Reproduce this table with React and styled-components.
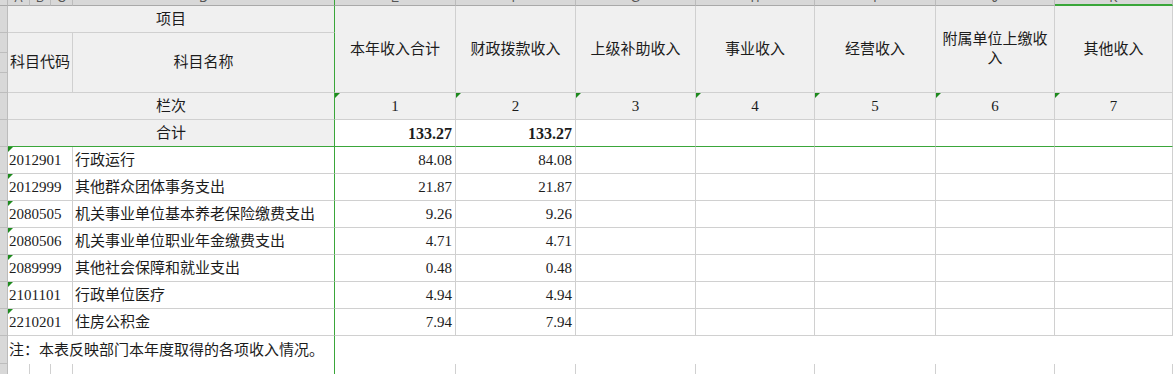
import React from "react";
import styled, { createGlobalStyle, css } from "styled-components";

const GRID = "#d0d0d0";
const GREEN = "#3aa63a";
const HEAD_BG = "#f0f0f0";

const GlobalStyle = createGlobalStyle`
  html, body { margin: 0; padding: 0; background: #fff; overflow: hidden; }
  #root { width: 1173px; height: 374px; overflow: hidden; }
`;

const Sheet = styled.div`
  display: grid;
  width: 1173px;
  height: 374px;
  overflow: hidden;
  grid-template-columns: 8px 22px 21px 22px 262px 121px 120px 120px 119px 121px 119px 1fr;
  grid-template-rows: 6px 27px 20px 20px 20px 27px 27px repeat(7, 27px) 28px 30px;
  font-family: "Liberation Serif", "Noto Sans CJK SC", serif;
  font-size: 15px;
  color: #1c1c1c;
  background: #fff;
`;

const Corner = styled.div`
  background: #d8d8d8;
  border-right: 1px solid #b8b8b8;
  border-bottom: 1px solid #a9a9a9;
  box-sizing: border-box;
`;

const ColHead = styled.div`
  box-sizing: border-box;
  background: #d8d8d8;
  border-right: 1px solid ${(p) => (p.$frozen ? GREEN : "#bcbcbc")};
  border-bottom: ${(p) => (p.$selected ? `2px solid ${GREEN}` : "1px solid #a9a9a9")};
  overflow: hidden;
  display: flex;
  align-items: flex-end;
  justify-content: center;
`;

const Letter = styled.span`
  font-family: "Liberation Sans", sans-serif;
  font-size: 12px;
  line-height: 12px;
  color: #555;
  margin-bottom: ${(p) => (p.$selected ? "0" : "1px")};
`;

const RowHead = styled.div`
  box-sizing: border-box;
  background: #d8d8d8;
  border-right: 1px solid #bcbcbc;
  border-bottom: ${(p) => (p.$last ? "none" : "1px solid #bdbdbd")};
`;

const Cell = styled.div`
  position: relative;
  box-sizing: border-box;
  grid-column: span ${(p) => p.$span || 1};
  grid-row: span ${(p) => p.$rows || 1};
  display: flex;
  align-items: center;
  justify-content: ${(p) =>
    p.$align === "right" ? "flex-end" : p.$align === "left" ? "flex-start" : "center"};
  text-align: ${(p) => p.$align || "center"};
  padding: 0 ${(p) => (p.$align === "right" ? "3px" : "0")} 0
    ${(p) => (p.$align === "left" ? p.$pad || "1px" : "0")};
  background: ${(p) => (p.$head ? HEAD_BG : "#fff")};
  border-right: 1px solid ${(p) => (p.$frozen ? GREEN : GRID)};
  border-bottom: 1px solid ${(p) => (p.$split ? GREEN : GRID)};
  font-weight: ${(p) => (p.$bold ? 700 : 400)};
  font-size: ${(p) => (p.$bold ? "16px" : "15px")};
  line-height: 19px;
  white-space: ${(p) => (p.$wrap ? "normal" : "nowrap")};
  ${(p) => p.$wrap && css`padding: 0 6px;`}
  ${(p) => p.$open && css`border-bottom: none;`}
  ${(p) => p.$bare && css`border-right: none;`}
  ${(p) =>
    p.$mark &&
    css`
      &::before {
        content: "";
        position: absolute;
        left: 0;
        top: 0;
        width: 0;
        height: 0;
        border-top: 5px solid #1e8a1e;
        border-right: 5px solid transparent;
      }
    `}
`;

const letters = ["A", "B", "C", "D", "E", "F", "G", "H", "I", "J", "K"];
const heads = [
  "本年收入合计",
  "财政拨款收入",
  "上级补助收入",
  "事业收入",
  "经营收入",
  "附属单位上缴收入",
  "其他收入",
];
const rows = [
  ["2012901", "行政运行", "84.08", "84.08"],
  ["2012999", "其他群众团体事务支出", "21.87", "21.87"],
  ["2080505", "机关事业单位基本养老保险缴费支出", "9.26", "9.26"],
  ["2080506", "机关事业单位职业年金缴费支出", "4.71", "4.71"],
  ["2089999", "其他社会保障和就业支出", "0.48", "0.48"],
  ["2101101", "行政单位医疗", "4.94", "4.94"],
  ["2210201", "住房公积金", "7.94", "7.94"],
];

export default function App() {
  return (
    <>
      <GlobalStyle />
      <Sheet>
        {/* column header strip */}
        <Corner />
        {letters.map((l) => (
          <ColHead key={l} $frozen={l === "D"} $selected={l === "K"}>
            <Letter $selected={l === "K"}>{l}</Letter>
          </ColHead>
        ))}

        {/* header row 1 */}
        <RowHead />
        <Cell $head $span={4} $frozen>项目</Cell>
        {heads.map((h) => (
          <Cell key={h} $head $rows={4} $wrap={h.length > 7}>
            {h}
          </Cell>
        ))}

        {/* header rows 2-4 */}
        <RowHead />
        <Cell $head $span={3} $rows={3}>科目代码</Cell>
        <Cell $head $rows={3} $frozen>科目名称</Cell>
        <RowHead />
        <RowHead />

        {/* 栏次 */}
        <RowHead />
        <Cell $head $span={4} $frozen>栏次</Cell>
        {heads.map((h, i) => (
          <Cell key={h} $head $mark>
            {i + 1}
          </Cell>
        ))}

        {/* 合计 */}
        <RowHead />
        <Cell $head $span={4} $frozen $split>合计</Cell>
        <Cell $align="right" $bold $split>133.27</Cell>
        <Cell $align="right" $bold $split>133.27</Cell>
        {heads.slice(2).map((h) => (
          <Cell key={h} $split />
        ))}

        {/* data rows */}
        {rows.map(([code, name, a, b]) => (
          <React.Fragment key={code}>
            <RowHead />
            <Cell $span={3} $align="left" $mark>{code}</Cell>
            <Cell $align="left" $pad="2px" $frozen>{name}</Cell>
            <Cell $align="right">{a}</Cell>
            <Cell $align="right">{b}</Cell>
            {heads.slice(2).map((h) => (
              <Cell key={h} />
            ))}
          </React.Fragment>
        ))}

        {/* note row */}
        <RowHead />
        <Cell $span={4} $align="left" $frozen $open>
          注：本表反映部门本年度取得的各项收入情况。
        </Cell>
        <Cell $span={7} $open $bare />

        {/* trailing row */}
        <RowHead $last />
        <Cell $open />
        <Cell $open />
        <Cell $open />
        <Cell $open $frozen />
        {heads.map((h) => (
          <Cell key={h} $open />
        ))}
      </Sheet>
    </>
  );
}
